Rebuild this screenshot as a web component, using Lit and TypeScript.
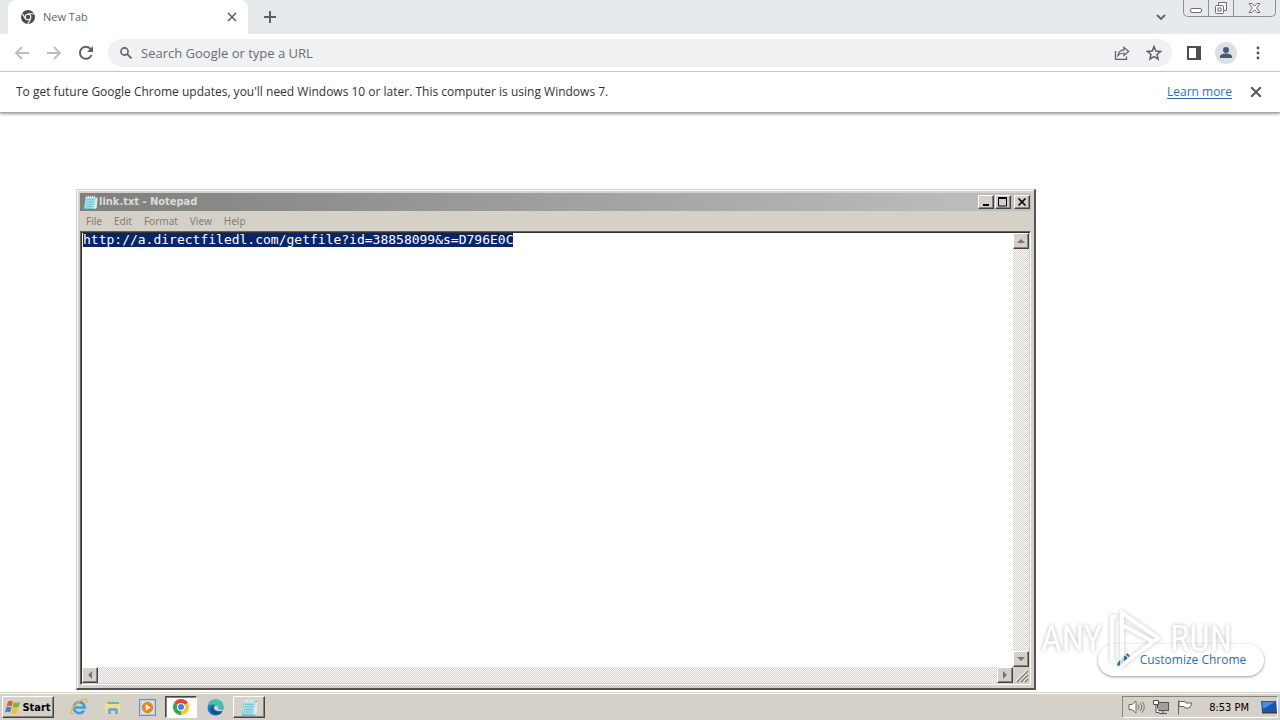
import { LitElement, html, css, svg } from "lit";
import { customElement, query } from "lit/decorators.js";

const reset = css`
  *, :host { box-sizing: border-box; }
  button {
    margin: 0; padding: 0; border: 0; background: none; color: inherit; font: inherit;
    display: flex; align-items: center; justify-content: center; flex: none;
  }
  svg { display: block; flex: none; }
`;

const cross = svg`<path d="M1 1l8 8M9 1l-8 8" fill="none" stroke="currentColor" stroke-width="1.7"/>`;

const notepadIcon = (size: number) => html`
  <svg width=${size} height=${size} viewBox="0 0 16 16">
    <path d="M3 2h12l-1.500 13.500H.8z" fill="#4f9db0"/>
    <path d="M3 2h10.300l-1.800 12.500H1.200z" fill="#a9e2ee"/>
    <path d="M4 5h7.500M3.700 7.500h7.500M3.300 10h7.500M3 12.300h7.500" stroke="#62b4c8" stroke-width=".8"/>
    <path d="M4 1v2M6 1v2M8 1v2M10 1v2M12 1v2" stroke="#f5f5f5"/>
    <path d="M13.300 3l-1.800 12 3-1L15.500 3z" fill="#e2eff1"/>
  </svg>`;

@customElement("browser-window")
class BrowserWindow extends LitElement {
  static styles = [reset, css`
    :host { display: flex; flex-direction: column; flex: 1; min-height: 0; background: #fff; color: #5f6368; font-family: "Open Sans", "Noto Sans", sans-serif; }
    .tabs { display: flex; height: 34px; background: #e7eaed; padding-left: 8px; }
    .tab { display: flex; align-items: center; width: 240px; padding: 0 10px 0 13px; gap: 8px; background: #fff; border-radius: 8px 8px 0 0; font-size: 11px; line-height: 14px; color: #5f6368; }
    .tab-title { flex: 1; }
    .new { width: 44px; }
    .spacer { flex: 1; }
    .chevron { width: 40px; margin-right: 2px; }
    .frame { display: flex; height: 17px; margin-right: 4px; border: 1px solid #8d9196; border-top: 0; border-radius: 0 0 5px 5px; color: #6c7075; }
    .frame button { width: 25px; border-right: 1px solid #8d9196; }
    .frame button:last-child { width: 41px; border-right: 0; }
    .bar { display: flex; align-items: center; height: 38px; padding: 0 6px; border-bottom: 1px solid #d5d7d9; }
    .nav { width: 32px; height: 32px; color: #5f6368; }
    .nav:disabled { color: #babcbe; }
    .omni { flex: 1; display: flex; align-items: center; height: 28px; margin: 0 6px; padding: 0 2px 0 12px; border-radius: 14px; background: #eff1f3; gap: 9px; }
    .omni input { flex: 1; min-width: 0; border: 0; outline: 0; background: none; padding: 0; font: 13px/20px "Open Sans", "Noto Sans", sans-serif; color: #3c4043; }
    .omni input::placeholder { color: #696d72; opacity: 1; }
    .actions { display: flex; }
    .avatar { width: 22px; height: 22px; border-radius: 50%; background: #dce0e6; overflow: hidden; }
    .info { display: flex; align-items: center; height: 41px; padding: 0 18px 0 16px; font-size: 12px; line-height: 16px; color: #333; border-bottom: 1px solid #a8a8a8; box-shadow: 0 1px 3px #0006; }
    .info p { margin: 0; flex: 1; }
    .info a { color: #2a6fc0; text-underline-offset: 2px; margin-right: 18px; }
    .info button { width: 12px; height: 16px; color: #55585b; }
    .page { flex: 1; display: flex; align-items: flex-end; justify-content: flex-end; padding: 16px; }
    .customize { height: 32px; width: 166px; gap: 10px; border-radius: 16px; background: #fff; color: #2c6ac4; font-size: 12px; line-height: 14px; box-shadow: 0 1px 3px #0006; }
  `];
  render() {
    return html`
      <div class="tabs">
        <div class="tab">
          <svg width="14" height="14" viewBox="0 0 14 14">
            <circle cx="7" cy="7" r="7" fill="#4a4d51"/><circle cx="7" cy="7" r="2.800" fill="none" stroke="#fff" stroke-width="1.100"/>
            <path d="M7 3.800h6M4.200 8.600L1.200 3.400M9.800 8.600l-3 5.200" stroke="#fff" stroke-width="1.100"/>
          </svg>
          <span class="tab-title">New Tab</span>
          <button aria-label="Close tab"><svg width="12" height="12" viewBox="-1 -1 12 12">${cross}</svg></button>
        </div>
        <button class="new" aria-label="New tab"><svg width="12" height="12" viewBox="0 0 12 12"><path d="M6 0v12M0 6h12" stroke="#5c6064" stroke-width="2"/></svg></button>
        <div class="spacer"></div>
        <button class="chevron" aria-label="Search tabs"><svg width="10" height="7" viewBox="0 0 10 7"><path d="M1 1l4 4 4-4" fill="none" stroke="#5f6368" stroke-width="1.800"/></svg></button>
        <div class="frame">
          <button aria-label="Minimize"><svg width="13" height="17"><rect x=".5" y="8.500" width="11" height="4" rx="1.500" fill="#fff" stroke="currentColor"/></svg></button>
          <button aria-label="Restore"><svg width="14" height="17"><path d="M4.500 5.500v-3h8v8h-3" fill="#fff" stroke="currentColor"/><rect x="1.500" y="5.500" width="8" height="8" rx="1" fill="#fff" stroke="currentColor"/><rect x="4" y="8" width="3" height="3" fill="none" stroke="currentColor"/></svg></button>
          <button aria-label="Close"><svg width="13" height="17"><path d="M1 3.500h3l2.500 2.700L9 3.500h3L8.600 8l3.400 4.500H9L6.500 9.800 4 12.500H1L4.400 8z" fill="#fff" stroke="currentColor"/></svg></button>
        </div>
      </div>
      <div class="bar">
        <button class="nav" disabled aria-label="Back"><svg width="16" height="14" viewBox="0 0 16 14"><path d="M15 7H2M8 1L2 7l6 6" fill="none" stroke="currentColor" stroke-width="1.800"/></svg></button>
        <button class="nav" disabled aria-label="Forward"><svg width="16" height="14" viewBox="0 0 16 14"><path d="M1 7h13M8 1l6 6-6 6" fill="none" stroke="currentColor" stroke-width="1.800"/></svg></button>
        <button class="nav" aria-label="Reload"><svg width="16" height="16" viewBox="0 0 16 16"><path d="M13.500 10A6 6 0 1 1 12.300 3.700L14 5.500" fill="none" stroke="currentColor" stroke-width="2"/><path d="M15 1v6H9z" fill="currentColor"/></svg></button>
        <div class="omni">
          <svg width="12" height="12" viewBox="0 0 12 12"><circle cx="4.500" cy="4.500" r="3.600" fill="none" stroke="#5f6368" stroke-width="1.600"/><path d="M7.200 7.200l4.300 4.300" stroke="#5f6368" stroke-width="1.800"/></svg>
          <input type="text" aria-label="Address and search" placeholder="Search Google or type a URL">
          <div class="actions">
            <button class="nav" aria-label="Share"><svg width="16" height="14" viewBox="0 0 16 14"><path d="M1.500 5v8.300h11V10.500" fill="none" stroke="currentColor" stroke-width="1.300"/><path d="M4 9.500c.5-3.500 2.500-5.500 6-5.700V1.300L14.700 5.500 10 9.500V7C7.300 7 5.500 7.800 4 9.500z" fill="none" stroke="currentColor" stroke-width="1.200"/></svg></button>
            <button class="nav" aria-label="Bookmark"><svg width="16" height="16" viewBox="0 0 16 16"><path d="M8 1.600l1.800 4.400 4.800.4-3.600 3.100 1.100 4.700L8 11.700l-4.100 2.500L5 9.500 1.400 6.400 6.200 6z" fill="none" stroke="currentColor" stroke-width="1.500"/></svg></button>
          </div>
        </div>
        <button class="nav" aria-label="Side panel"><svg width="14" height="14" viewBox="0 0 14 14"><path d="M0 0h14v14H0zM2 2v10h7V2z" fill="#4c5054" fill-rule="evenodd"/></svg></button>
        <button class="nav" aria-label="Profile"><span class="avatar"><svg width="22" height="22" viewBox="0 0 22 22"><circle cx="11" cy="8" r="3" fill="#4b5873"/><path d="M5 16v-1.500c0-2 3-3 6-3s6 1 6 3V16z" fill="#4b5873"/></svg></span></button>
        <button class="nav" aria-label="Menu"><svg width="4" height="14" viewBox="0 0 4 14"><g fill="#4c5054"><circle cx="2" cy="2" r="1.400"/><circle cx="2" cy="7" r="1.400"/><circle cx="2" cy="12" r="1.400"/></g></svg></button>
      </div>
      <div class="info">
        <p>To get future Google Chrome updates, you'll need Windows 10 or later. This computer is using Windows 7.</p>
        <a href="#learn">Learn more</a>
        <button aria-label="Dismiss"><svg width="12" height="12" viewBox="0 0 10 10">${cross}</svg></button>
      </div>
      <div class="page">
        <button class="customize"><svg width="14" height="14" viewBox="0 0 14 14"><path d="M1 13l.7-3.500L9 2.200 11.800 5 4.500 12.300zM9.800 1.400l1-1c.6-.5 3.300 2 2.700 2.800l-1 1z" fill="#3972c2"/></svg>Customize Chrome</button>
      </div>`;
  }
}

@customElement("notepad-window")
class NotepadWindow extends LitElement {
  @query("textarea") editor!: HTMLTextAreaElement;
  static styles = [reset, css`
    :host { display: flex; flex-direction: column; padding: 3px; background: #d5d0c8; border: 1px solid #d5d0c8; border-right: 2px solid #55534f; border-bottom: 2px solid #55534f; box-shadow: inset 1px 1px #fff; font: 11px/14px "DejaVu Sans Condensed", sans-serif; }
    .title { display: flex; align-items: center; height: 18px; flex: none; padding: 0 1px 0 3px; gap: 1px; background: linear-gradient(90deg, #7f7f7f, #c0c0c0); color: #dedbd5; font-weight: bold; }
    .title span { flex: 1; }
    .raised { width: 16px; height: 14px; color: #000; background: #d5d0c8; border: 1px solid; border-color: #fff #444 #444 #fff; box-shadow: inset -1px -1px #87847e; }
    .close { margin-left: 2px; }
    .menu { display: flex; align-items: center; height: 20px; flex: none; color: #817e79; }
    .menu button { padding: 0 6px; font: 10px/14px "Noto Sans", sans-serif; }
    .field { flex: 1; min-height: 0; display: grid; grid-template: 1fr 16px / 1fr 16px; border: 1px solid; border-color: #65625e #fff #fff #65625e; box-shadow: inset 1px 1px #333; padding: 1px; }
    textarea { resize: none; border: 0; outline: 0; margin: 0; padding: 0 0 0 1px; width: 100%; height: 100%; overflow: hidden; background: #fff; color: #000; font: 13px/14px "DejaVu Sans Mono", monospace; }
    textarea::selection { background: #0a246a; color: #fff; }
    .track { display: flex; justify-content: space-between; background: repeating-conic-gradient(#fff 0 25%, #d5d0c8 0 50%) 0 0 / 2px 2px; }
    .vertical { flex-direction: column; }
    .track .raised { height: 16px; color: #77746f; }
    .grip { background: #d5d0c8; }
  `];
  firstUpdated() {
    this.editor.focus();
    this.editor.select();
  }
  arrow(label: string, d: string) {
    return html`<button class="raised" aria-label=${label}><svg width="8" height="8" viewBox="0 0 8 8"><path d=${d} fill="currentColor"/></svg></button>`;
  }
  render() {
    return html`
      <div class="title">
        ${notepadIcon(15)}
        <span>link.txt - Notepad</span>
        <button class="raised" aria-label="Minimize"><svg width="10" height="10"><path d="M2 8h6" stroke="currentColor" stroke-width="2"/></svg></button>
        <button class="raised" aria-label="Maximize"><svg width="10" height="10"><path d="M.5 1v8h8V1" fill="none" stroke="currentColor"/><path d="M0 1h9" stroke="currentColor" stroke-width="2"/></svg></button>
        <button class="raised close" aria-label="Close"><svg width="10" height="10"><path d="M1.500 1.500l7 7M8.500 1.500l-7 7" stroke="currentColor" stroke-width="1.700"/></svg></button>
      </div>
      <div class="menu">${["File", "Edit", "Format", "View", "Help"].map((m) => html`<button>${m}</button>`)}</div>
      <div class="field">
        <textarea aria-label="Document" spellcheck="false" .value=${"http://a.directfiledl.com/getfile?id=38858099&s=D796E0C"}></textarea>
        <div class="track vertical">${this.arrow("Scroll up", "M0 6l4-4 4 4z")}${this.arrow("Scroll down", "M0 2l4 4 4-4z")}</div>
        <div class="track">${this.arrow("Scroll left", "M6 0L2 4l4 4z")}${this.arrow("Scroll right", "M2 0l4 4-4 4z")}</div>
        <svg class="grip" width="16" height="16"><path d="M4 15L15 4M8 15l7-7M12 15l3-3" stroke="#85827c" stroke-width="1.500"/><path d="M3 14L14 3M7 14l7-7M11 14l3-3" stroke="#fff"/></svg>
      </div>`;
  }
}

@customElement("task-bar")
class TaskBar extends LitElement {
  static styles = [reset, css`
    :host { display: flex; flex: none; height: 28px; padding: 3px 2px 2px; background: #d5d0c8; border-top: 1px solid #d5d0c8; box-shadow: inset 0 1px #fff; font-family: "DejaVu Sans Condensed", sans-serif; color: #000; }
    .start { width: 52px; gap: 1px; font-size: 11px; font-weight: bold; }
    .start, .open { border: 1px solid; border-color: #fff #444 #444 #fff; box-shadow: inset -1px -1px #87847e; }
    .apps { flex: 1; display: flex; padding-left: 9px; gap: 2px; }
    .apps button { width: 32px; }
    .apps .active { background: #fff; border: 1px solid; border-color: #444 #fff #fff #444; box-shadow: inset 1px 1px #87847e; }
    .tray { display: flex; align-items: center; gap: 8px; padding: 0 0 0 5px; border: 1px solid; border-color: #87847e #fff #fff #87847e; font-size: 11px; }
    .clock { margin: 0 4px 0 8px; }
  `];
  render() {
    return html`
      <button class="start"><svg width="16" height="16" viewBox="0 0 16 16"><path d="M3 2.500c2-1.200 3.500-1 5 0L6.700 7.500c-1.500-1-3-1-5-.2z" fill="#e85b25"/><path d="M9 3c1.800 1 3.800 1 6-.2l-1.300 5c-2 1-4 1-6 .2z" fill="#75b53b"/><path d="M1.400 8.300c2-.8 3.500-.8 5 .2l-1.300 5c-1.500-1-3-1.200-5-.2z" fill="#3b83cf"/><path d="M7.400 9c2 .9 4 .9 6 0l-1.300 5c-2 1-4 1-6 0z" fill="#f6bd2b"/></svg>Start</button>
      <div class="apps">
        <button aria-label="Internet Explorer"><svg width="18" height="18" viewBox="0 0 18 18"><path d="M14 12.500A5.500 5.500 0 1 1 14.800 9.500H5" fill="none" stroke="#3d9fdc" stroke-width="2.600"/><path d="M3 15.500C-1 17 2 9 8 4.500S18.500 0 16 5" fill="none" stroke="#e9b532" stroke-width="1.300"/></svg></button>
        <button aria-label="Explorer"><svg width="18" height="18" viewBox="0 0 18 18"><path d="M2 3h5l1 1h7v10H2z" fill="#e9c86a"/><path d="M4 4h11v4H4z" fill="#70b6ad"/><path d="M1 6h15v9H1z" fill="#f4de92"/><path d="M4 16v-4q0-2 2-2h6q2 0 2 2v4h-3v-3H7v3z" fill="#69add9"/></svg></button>
        <button aria-label="Media Player"><svg width="17" height="17" viewBox="0 0 17 17"><rect x=".5" y=".5" width="16" height="16" fill="#b4d2ee" stroke="#5a98cd"/><rect x="2.500" y="2.500" width="12" height="12" fill="#f0e7d8"/><circle cx="8.500" cy="8.500" r="5.700" fill="#f28218"/><path d="M6.700 5.300v6.400l5-3.200z" fill="#fff"/></svg></button>
        <button class="active" aria-label="Chrome"><svg width="16" height="16" viewBox="0 0 16 16"><path d="M8 8L1.070 4A8 8 0 0 1 14.930 4z" fill="#e14334"/><path d="M8 8L14.930 4A8 8 0 0 1 8 16z" fill="#f8c832"/><path d="M8 8V16A8 8 0 0 1 1.070 4z" fill="#37a653"/><circle cx="8" cy="8" r="4" fill="#fff"/><circle cx="8" cy="8" r="3" fill="#437fe3"/></svg></button>
        <button aria-label="Edge"><svg width="17" height="17" viewBox="0 0 17 17"><circle cx="8.500" cy="8.500" r="8" fill="#1679ca"/><path d="M1 7.500C2-1.500 16-2 16.500 7c0 3-3 4.500-6.500 3 2-2-1-5-4-4.500C3.700 5.700 2 6 1 7.500z" fill="#43c4b0"/><path d="M7 7.500c-2 3 1 6.500 8 5-3 4.500-10 4.500-11.500-1C3 9.500 5 7.500 7 7.500z" fill="#145091"/><path d="M7.500 7c-2 3 1 5.500 8 5l1-2c-4 1.500-6 0-5.500-1.500C11 7 9 6 7.500 7z" fill="#d5d0c8"/></svg></button>
        <button class="open" aria-label="Notepad">${notepadIcon(17)}</button>
      </div>
      <div class="tray">
        <svg width="17" height="16" viewBox="0 0 17 16"><path d="M1 5.500h3L8 2v12l-4-3.500H1z" fill="#fff" stroke="#6c6963"/><path d="M10 5.500q2 2.500 0 5M12 4q3.500 4 0 8M14 2.500q4.500 5.500 0 11" fill="none" stroke="#77746e"/></svg>
        <svg width="16" height="16" viewBox="0 0 16 16"><rect x="4.500" y="3.500" width="11" height="8" fill="#a19f9b" stroke="#55534f"/><path d="M6 14.500h8M10 12v2" stroke="#55534f"/><path d="M.5 1.500h5v4h-5zM3 6v7.500h3" fill="#fff" stroke="#55534f"/></svg>
        <svg width="16" height="16" viewBox="0 0 16 16"><path d="M1.500 1.500v14M2 2.500h6l1 1.500h6l-2.500 5H8L7 7.500H2z" fill="#fff" stroke="#66635e"/></svg>
        <span class="clock">8:53 PM</span>
        <svg width="16" height="14" viewBox="0 0 16 14"><path d="M0 1h15l1 11H1z" fill="#1956ad"/><path d="M1 2h13L2 9z" fill="#488bdf"/><path d="M1 12h15v1.500H1z" fill="#353b47"/></svg>
      </div>`;
  }
}

@customElement("app-root")
class AppRoot extends LitElement {
  static styles = css`
    :host { display: flex; flex-direction: column; position: relative; height: 100vh; overflow: hidden; }
    .notepad { position: absolute; left: 76px; top: 189px; width: 75%; height: 501px; }
    .mark { position: absolute; right: 48px; bottom: 48px; display: flex; align-items: center; gap: 6px; color: #fff; font: 36px/44px "Roboto Condensed", "Liberation Sans Narrow", "Liberation Sans", sans-serif; text-shadow: 0 0 4px #0006; pointer-events: none; opacity: .7; }
    .mark svg { display: block; filter: drop-shadow(0 0 2px #0005); }
  `;
  render() {
    return html`
      <browser-window></browser-window>
      <task-bar></task-bar>
      <notepad-window class="notepad"></notepad-window>
      <div class="mark">
        <span>ANY</span>
        <svg width="56" height="66" viewBox="0 0 56 66"><path d="M14 7l36 25-36 27zM14 19l32 17M8 11H4v44h3" fill="none" stroke="#fff" stroke-width="4"/></svg>
        <span>RUN</span>
      </div>`;
  }
}
